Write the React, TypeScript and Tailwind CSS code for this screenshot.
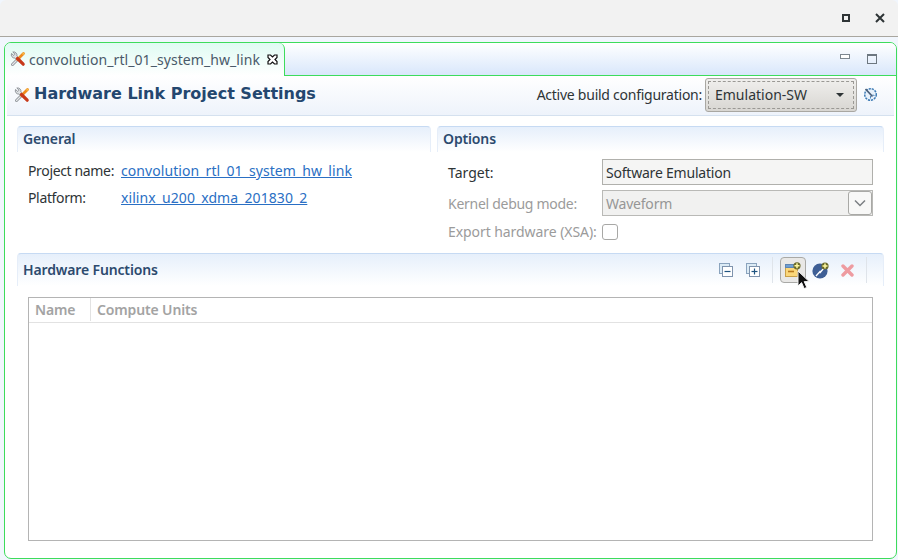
const sans = "font-['Noto_Sans','Open_Sans',sans-serif]";

function ToolsIcon() {
  return (
    <svg width="16" height="16" viewBox="0 0 16 16" className="shrink-0">
      <path d="M2.500 13.500 L7 9" stroke="#8f9499" strokeWidth="3" strokeLinecap="round" />
      <path d="M2.500 13.500 L7 9" stroke="#e6e8ea" strokeWidth="1.200" strokeLinecap="round" />
      <path d="M1.500 2.500a3.400 3.400 0 0 0 3.400 4.600l1.600 1.600 2-2L6.900 5.100a3.400 3.400 0 0 0-4.100-4.100l2.200 2.200-1.200 1.300z" fill="#dfe2e5" stroke="#7c8186" strokeWidth="0.800" />
      <path d="M13.500 2.500 L7.500 8.500" stroke="#ef8a1d" strokeWidth="2.800" strokeLinecap="round" />
      <path d="M7.500 7.500 L13.200 13.200" stroke="#c7391a" strokeWidth="3.200" strokeLinecap="round" />
      <path d="M12.500 3.500 L14 2" stroke="#f6c04a" strokeWidth="1.600" />
    </svg>
  );
}

function CollapseIcon({ plus }: { plus?: boolean }) {
  return (
    <svg width="14" height="14" viewBox="0 0 14 14" className="shrink-0">
      <rect x="0.500" y="0.500" width="10" height="10" fill="#dcebf5" stroke="#8aa3bd" />
      <rect x="3.500" y="3.500" width="10" height="10" fill="#ffffff" stroke="#7f93ad" />
      <path d="M5.500 8.500h6" stroke="#1f5480" strokeWidth="1.200" />
      {plus && <path d="M8.500 5.500v6" stroke="#1f5480" strokeWidth="1.200" />}
    </svg>
  );
}

function PlusBadge({ x, y }: { x: number; y: number }) {
  return (
    <g transform={`translate(${x} ${y})`}>
      <circle cx="0" cy="0" r="3.600" fill="#6a6a2a" />
      <path d="M-2.500 0h5M0-2.500v5" stroke="#fdf7a0" strokeWidth="1.500" />
    </g>
  );
}

function AddFunctionIcon() {
  return (
    <svg width="16" height="16" viewBox="0 0 16 16">
      <rect x="0.500" y="2.500" width="12" height="12" fill="#fbd77a" stroke="#c9a04a" />
      <rect x="0.500" y="2.500" width="12" height="3" fill="#6f9ed1" stroke="#5f86b2" />
      <path d="M3 9.500h6" stroke="#b8791f" strokeWidth="1.600" />
      <PlusBadge x={12} y={3.800} />
    </svg>
  );
}

function WandIcon() {
  return (
    <svg width="17" height="17" viewBox="0 0 17 17">
      <circle cx="8" cy="9" r="7.600" fill="#3f5f95" />
      <path d="M4 14 L8.500 9 L7.800 11 L11.500 6.500" stroke="#ffffff" strokeWidth="1.300" fill="none" />
      <PlusBadge x={13} y={4} />
    </svg>
  );
}

function ConfigIcon() {
  return (
    <svg width="15" height="15" viewBox="0 0 15 15" className="shrink-0">
      <circle cx="7.500" cy="7.500" r="5.800" fill="#e8f1fb" stroke="#3f7cb5" strokeWidth="1.500" strokeDasharray="2.200 0.900" />
      <path d="M2.500 2 L9.500 9.500" stroke="#4a5e78" strokeWidth="1.800" />
      <path d="M7.500 9v2.500M9.500 8l2 0.500" stroke="#3f7cb5" strokeWidth="0.900" />
    </svg>
  );
}

function SectionHead({ title, tall, children }: { title: string; tall?: boolean; children?: React.ReactNode }) {
  return (
    <div
      className={
        tall
          ? "relative flex h-[33px] items-center rounded-t-[4px] border-x border-t border-x-[#e6eef9] border-t-[#c6daf3] bg-gradient-to-b from-[#e6effb] to-white pb-[2px] pl-[5px]"
          : "relative flex h-[26px] items-center rounded-t-[4px] border-x border-t border-x-[#e6eef9] border-t-[#c6daf3] bg-gradient-to-b from-[#e6effb] to-white pb-[3px] pl-[5px]"
      }
    >
      <span className="text-[14px] font-semibold tracking-[-0.01em] text-[#2c4a6e]">{title}</span>
      {children}
    </div>
  );
}

export default function App() {
  return (
    <div className={`flex h-[560px] w-[898px] flex-col overflow-hidden bg-[#f1f6fd] text-[14px] text-[#2e3436] ${sans}`}>
      <div className="flex h-[37px] shrink-0 items-center justify-end rounded-t-[6px] border-b border-[#a9a69f] bg-[#f2f2f2] pr-[13px]">
        <div className="mr-[25px] h-[8px] w-[8px] border-2 border-[#2e3436]" />
        <svg width="10" height="10" viewBox="0 0 10 10">
          <path d="M1 1l8 8M9 1l-8 8" stroke="#2e3436" strokeWidth="2" />
        </svg>
      </div>

      <div className="flex min-h-0 flex-1 flex-col pt-[5px] pr-[1px] pb-[1px] pl-[4px]">
        <div className="flex min-h-0 flex-1 flex-col overflow-hidden rounded-[7px] border border-[#3ddc5c] bg-white">
          {/* editor tab strip */}
          <div className="flex h-[33px] shrink-0">
            <div className="flex w-[280px] items-center rounded-tr-[6px] border-r border-[#3ddc5c] bg-gradient-to-b from-[#dffbf3] to-white pb-[1px] pl-[5px]">
              <ToolsIcon />
              <span className="ml-[3px] text-[14px] tracking-[0.005em] text-[#4a5a6a]">convolution_rtl_01_system_hw_link</span>
              <svg width="11" height="11" viewBox="0 0 11 11" className="ml-[7px]">
                <path d="M1 1h2.500L5.500 3 7.500 1H10v2.500L8 5.500l2 2V10H7.500L5.500 8l-2 2H1V7.500l2-2-2-2z" fill="#fff" stroke="#111" strokeWidth="1.200" />
              </svg>
            </div>
            <div className="flex flex-1 items-center justify-end border-b border-[#3ddc5c] bg-gradient-to-b from-white to-[#d9e7fb] pr-[19px]">
              <div className="mr-[17px] mb-[5px] h-[5px] w-[10px] border border-[#7d8790] bg-white" />
              <div className="h-[10px] w-[10px] border border-t-2 border-[#6d7780]" />
            </div>
          </div>

          {/* form heading */}
          <div className="mx-[2px] flex h-[40px] shrink-0 items-center border-b border-[#d5e1ef] bg-gradient-to-b from-white to-[#eef3fb] pr-[16px] pb-[2px] pl-[7px]">
            <ToolsIcon />
            <span className="mb-[2px] ml-[4px] font-['DejaVu_Sans',sans-serif] text-[16px] font-bold text-[#24476f]">Hardware Link Project Settings</span>
            <span className="mr-[3px] ml-auto text-[14px] tracking-[-0.018em]">Active build configuration:</span>
            <div className="h-[34px] w-[152px] shrink-0 rounded-[3px] border border-[#a9a7a2] bg-gradient-to-b from-[#f0efed] to-[#d8d6d2] p-[2px]">
              <div className="flex h-full items-center justify-between border border-dashed border-[#9a9894] pr-[9px] pl-[6px]">
                <span>Emulation-SW</span>
                <div className="h-0 w-0 border-x-[4px] border-t-[4px] border-x-transparent border-t-[#2e3436]" />
              </div>
            </div>
            <span className="ml-[6px]"><ConfigIcon /></span>
          </div>

          {/* form body */}
          <div className="flex min-h-0 flex-1 flex-col pt-[10px] pr-[12px] pb-[17px] pl-[12px]">
            <div className="grid h-[127px] shrink-0 grid-cols-[414px_447px] gap-x-[6px]">
              <div>
                <SectionHead title="General" />
                <div className="mt-[9px] grid grid-cols-[93px_1fr] gap-y-[7px] pl-[11px]">
                  <span className="leading-[20px] tracking-[-0.025em]">Project name:</span>
                  <a className="leading-[20px] tracking-[0.005em] text-[#2a6fc4] underline">convolution_rtl_01_system_hw_link</a>
                  <span className="leading-[20px] tracking-[-0.025em]">Platform:</span>
                  <a className="leading-[20px] tracking-[0.005em] text-[#2a6fc4] underline">xilinx_u200_xdma_201830_2</a>
                </div>
              </div>
              <div>
                <SectionHead title="Options" />
                <div className="mt-[7px] grid grid-cols-[154px_271px] items-center gap-y-[5px] pl-[11px]">
                  <span>Target:</span>
                  <div className="flex h-[26px] items-center border border-[#b0b0ac] bg-[#f5f5f4] pl-[3px] tracking-[-0.015em]">Software Emulation</div>
                  <span className="tracking-[-0.02em] text-[#9b9b9b]">Kernel debug mode:</span>
                  <div className="flex h-[26px] items-center border border-[#b9b9b6] bg-[#f1f1f0] pl-[3px] text-[#969696]">
                    <span className="tracking-[-0.015em]">Waveform</span>
                    <div className="ml-auto flex h-[24px] w-[24px] items-center justify-center rounded-[3px] border border-[#a9a9a6] bg-[#f8f8f7]">
                      <svg width="12" height="8" viewBox="0 0 12 8">
                        <path d="M1 1.500l5 5 5-5" fill="none" stroke="#7b7f82" strokeWidth="1.500" />
                      </svg>
                    </div>
                  </div>
                  <span className="whitespace-nowrap tracking-[-0.005em] text-[#9b9b9b]">Export hardware (XSA):</span>
                  <div className="h-[16px] w-[16px] rounded-[3px] border border-[#a8a8a6] bg-white" />
                </div>
              </div>
            </div>

            <SectionHead title="Hardware Functions" tall>
              <div className="mt-[2px] ml-auto flex items-center pr-[16px]">
                <span className="mr-[13px]"><CollapseIcon /></span>
                <span className="mr-[12px]"><CollapseIcon plus /></span>
                <div className="mr-[7px] h-[26px] w-px bg-[#dfe4ea]" />
                <div className="relative flex h-[26px] w-[26px] items-center justify-center rounded-[4px] border border-[#a9a9a6] bg-[#e9e8e6]">
                  <AddFunctionIcon />
                  <svg width="13" height="20" viewBox="0 0 13 20" className="absolute top-[12px] left-[16px]">
                    <path d="M1 1v15l3.600-3.400 2.600 6 2.600-1.200-2.600-5.800h5z" fill="#111" stroke="#f4f4f4" strokeWidth="1" />
                  </svg>
                </div>
                <span className="ml-[6px]"><WandIcon /></span>
                <svg width="13" height="13" viewBox="0 0 13 13" className="ml-[12px]">
                  <path d="M2 2l9 9M11 2l-9 9" stroke="#ee9ba0" strokeWidth="3.400" strokeLinecap="round" />
                </svg>
                <div className="ml-[12px] h-[26px] w-px bg-[#dfe4ea]" />
              </div>
            </SectionHead>

            <div className="mx-[11px] mt-[11px] flex min-h-0 flex-1 flex-col border border-[#b4b4b4] bg-white">
              <div className="flex h-[25px] shrink-0 items-center border-b border-[#e2e2e2] pb-[1px] text-[14px] font-semibold tracking-[-0.01em] text-[#a3a3a3]">
                <span className="flex h-full w-[62px] items-center border-r border-[#e2e2e2] pl-[6px]">Name</span>
                <span className="pl-[6px]">Compute Units</span>
              </div>
            </div>
          </div>
        </div>
      </div>
    </div>
  );
}
